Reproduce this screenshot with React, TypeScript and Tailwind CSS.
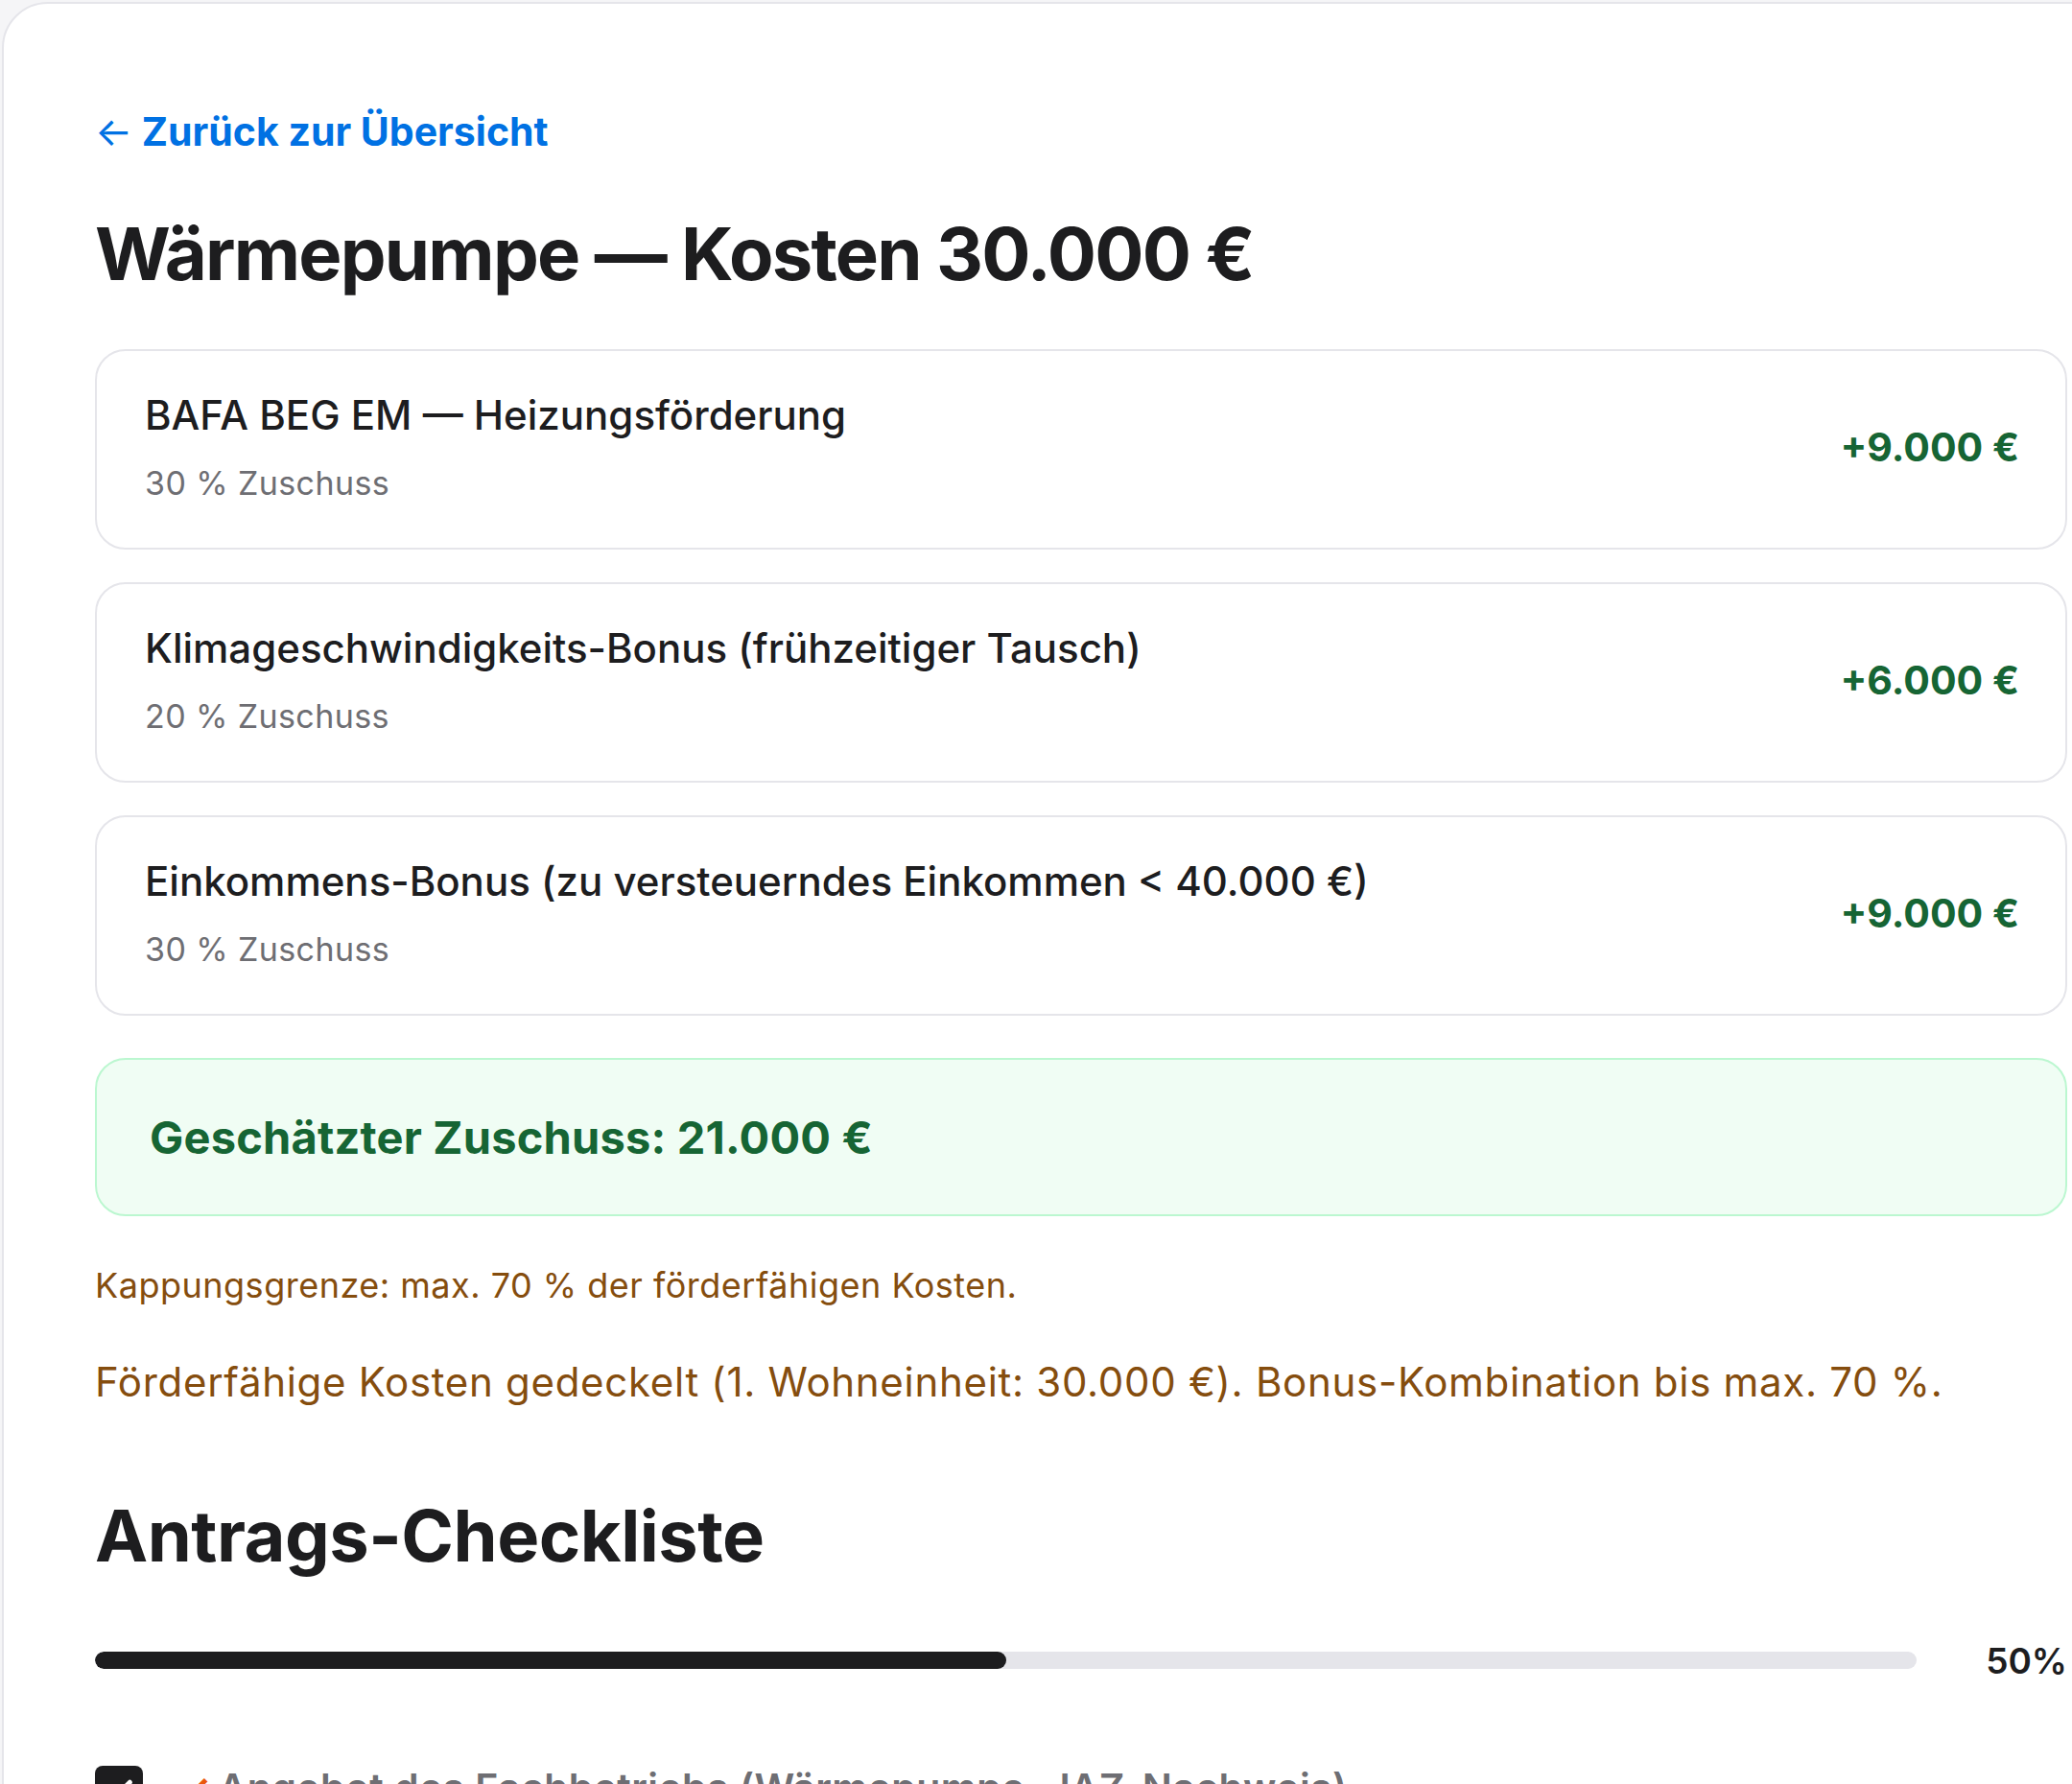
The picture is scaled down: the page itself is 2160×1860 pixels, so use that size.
import React from "react";

const items = [
  { title: "BAFA BEG EM — Heizungsförderung", sub: "30 % Zuschuss", amount: "+9.000 €" },
  { title: "Klimageschwindigkeits-Bonus (frühzeitiger Tausch)", sub: "20 % Zuschuss", amount: "+6.000 €" },
  { title: "Einkommens-Bonus (zu versteuerndes Einkommen < 40.000 €)", sub: "30 % Zuschuss", amount: "+9.000 €" },
];

export default function App() {
  return (
    <div className="w-[2160px] h-[1860px] overflow-hidden bg-[#f5f5f7]" style={{ fontFamily: "Inter, 'Noto Sans', sans-serif" }}>
      <div className="ml-[2px] mt-[2px] w-[2400px] h-[2100px] bg-white border-2 border-[#e5e5ea] rounded-[48px] pl-[95px] pt-[109px]">
        <div className="w-[2056px] flex flex-col">
          <a className="text-[41px] leading-[1.2] font-bold text-[#0071e3] self-start">
            <span className="font-normal">←</span> Zurück zur Übersicht
          </a>
          <h1 className="mt-[57px] text-[76px] leading-[1.2] font-bold text-[#1d1d1f] tracking-[-1.8px]">
            Wärmepumpe — Kosten 30.000 €
          </h1>
          <div className="mt-[54px] flex flex-col gap-[34px]">
            {items.map((it) => (
              <div key={it.title} className="border-2 border-[#e5e5ea] rounded-[32px] pl-[50px] pr-[48px] pt-[41px] pb-[46px] flex items-center justify-between">
                <div className="flex flex-col">
                  <div className="text-[42px] leading-[1.25] font-medium text-[#1d1d1f]">{it.title}</div>
                  <div className="mt-[23px] text-[34px] leading-[1.25] tracking-[0.4px] text-[#6e6e73]">{it.sub}</div>
                </div>
                <div className="text-[41px] font-bold text-[#166534]">{it.amount}</div>
              </div>
            ))}
          </div>
          <div className="mt-[44px] h-[165px] border-2 border-[#bbf7d0] bg-[#f0fdf4] rounded-[32px] pl-[55px] flex items-center">
            <div className="text-[47px] font-bold text-[#166534] tracking-[0.2px]">Geschätzter Zuschuss: 21.000 €</div>
          </div>
          <p className="mt-[50px] text-[36px] leading-[1.25] tracking-[0.5px] text-[#854d0e]">
            Kappungsgrenze: max. 70 % der förderfähigen Kosten.
          </p>
          <p className="mt-[52px] text-[42px] leading-[1.25] tracking-[0.7px] text-[#854d0e]">
            Förderfähige Kosten gedeckelt (1. Wohneinheit: 30.000 €). Bonus-Kombination bis max. 70 %.
          </p>
          <h2 className="mt-[89px] text-[74px] leading-[1.2] font-bold text-[#1d1d1f] tracking-[-0.5px]">Antrags-Checkliste</h2>
          <div className="mt-[58px] flex items-center gap-[72px]">
            <div className="flex-1 h-[18px] rounded-full bg-[#e5e5ea] overflow-hidden">
              <div className="h-full bg-[#1d1d1f] rounded-full" style={{ width: "50%" }} />
            </div>
            <div className="text-[37px] font-semibold text-[#1d1d1f]">50%</div>
          </div>
          <div className="mt-[82px] flex items-start gap-[20px]">
            <div className="w-[50px] h-[50px] rounded-[8px] bg-[#1d1d1f] flex items-center justify-center shrink-0">
              <svg width="34" height="34" viewBox="0 0 24 24" fill="none" stroke="white" strokeWidth="3.5" strokeLinecap="round" strokeLinejoin="round">
                <path d="M4 12.5l5 5L20 6.5" />
              </svg>
            </div>
            <div className="text-[41px] leading-[1.25] font-semibold tracking-[0.4px] text-[#6e6e73] mt-[-2px]">
              <span className="text-[#ea580c] mr-[8px] ml-[14px]">✓</span>Angebot des Fachbetriebs (Wärmepumpe, JAZ-Nachweis)
            </div>
          </div>
        </div>
      </div>
    </div>
  );
}
